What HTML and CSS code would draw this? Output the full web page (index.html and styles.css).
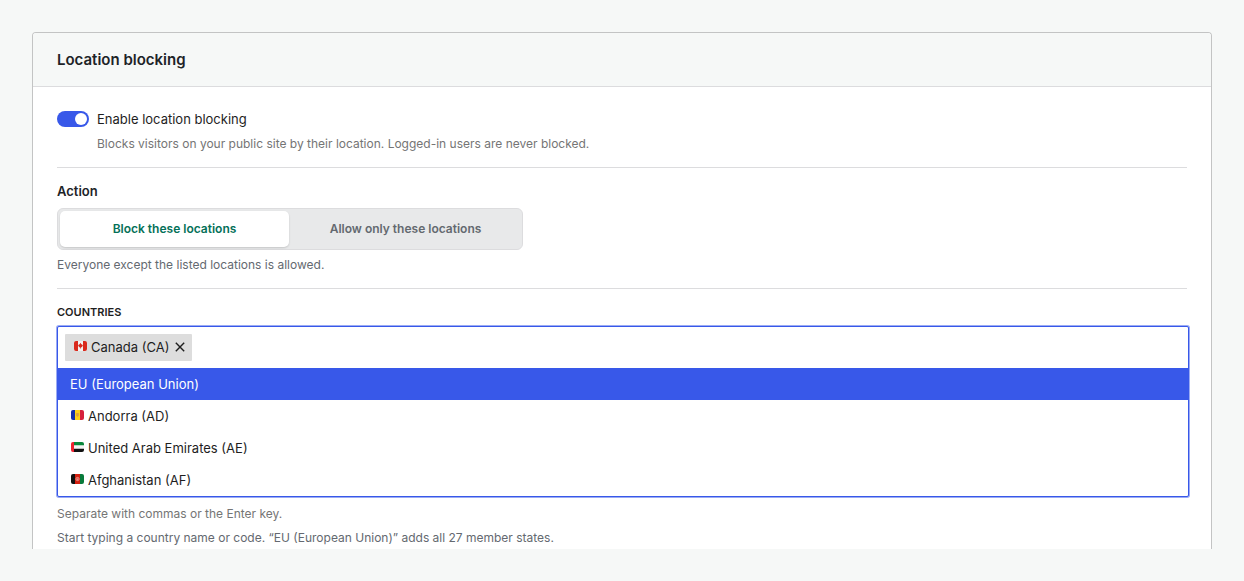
FILE: index.html
```html
<!DOCTYPE html>
<html lang="en">
<head>
  <meta charset="UTF-8">
  <meta name="viewport" content="width=device-width, initial-scale=1">
  <title>Location blocking</title>
  <link rel="stylesheet" href="styles.css">
</head>
<body>
  <main class="page">
    <section class="card">
      <header class="card-header">
        <h2>Location blocking</h2>
      </header>

      <form class="card-body">
        <!-- Toggle -->
        <div class="section">
          <div class="toggle-row">
            <input class="toggle" type="checkbox" id="enable-blocking" role="switch" aria-describedby="enable-help" checked>
            <label for="enable-blocking">Enable location blocking</label>
          </div>
          <p class="help toggle-help" id="enable-help">Blocks visitors on your public site by their location. Logged-in users are never blocked.</p>
        </div>

        <!-- Action -->
        <div class="section">
          <h3 class="section-title" id="action-title">Action</h3>
          <div class="segmented" role="group" aria-labelledby="action-title">
            <button class="segment active" type="button" aria-pressed="true">Block these locations</button>
            <button class="segment" type="button" aria-pressed="false">Allow only these locations</button>
          </div>
          <p class="help help-dark">Everyone except the listed locations is allowed.</p>
        </div>

        <!-- Countries -->
        <div class="section">
          <label class="field-label" for="countries">Countries</label>
          <div class="token-field">
            <div class="token-input">
              <span class="token">
                <svg class="flag" viewBox="0 0 13 10" aria-hidden="true">
                  <rect width="13" height="10" rx="2" fill="#f1f1f1"/>
                  <path d="M2 0h2v10H2a2 2 0 0 1-2-2V2a2 2 0 0 1 2-2zM9 0h2a2 2 0 0 1 2 2v6a2 2 0 0 1-2 2H9z" fill="#d9291c"/>
                  <path d="M6.500 1.800l.7 1.300.6-.2-.1 1.100 1.200-.3-.4 1.500-1.600 1.500h-.2v1.300h-.4V6.700h-.2L4.500 5.200l-.4-1.500 1.200.3-.1-1.100.6.2z" fill="#d9291c"/>
                </svg>
                Canada (CA)
                <button class="token-remove" type="button" aria-label="Remove Canada">
                  <svg viewBox="0 0 10 10" aria-hidden="true"><path d="M.8.8l8.400 8.400M9.200.8L.8 9.200"/></svg>
                </button>
              </span>
              <input type="text" id="countries" role="combobox" aria-expanded="true" aria-controls="country-list" autocomplete="off">
            </div>
            <ul class="options" id="country-list" role="listbox">
              <li class="option selected" role="option" aria-selected="true">EU (European Union)</li>
              <li class="option" role="option">
                <svg class="flag" viewBox="0 0 13 10" aria-hidden="true">
                  <path d="M2 0h3v10H2a2 2 0 0 1-2-2V2a2 2 0 0 1 2-2z" fill="#1430a8"/>
                  <path d="M4 0h5v10H4z" fill="#fcd116"/>
                  <path d="M9 0h2a2 2 0 0 1 2 2v6a2 2 0 0 1-2 2H9z" fill="#d6203c"/>
                  <path d="M5.200 3h2.600v2.600L6.500 7 5.200 5.600z" fill="#d9a040"/>
                </svg>
                Andorra (AD)
              </li>
              <li class="option" role="option">
                <svg class="flag" viewBox="0 0 13 10" aria-hidden="true">
                  <rect width="13" height="10" rx="2" fill="#f4f4f4"/>
                  <path d="M3 0h8a2 2 0 0 1 2 2v1.300H3z" fill="#07873a"/>
                  <path d="M3 6.700h10V8a2 2 0 0 1-2 2H3z" fill="#111"/>
                  <path d="M2 0h1v10H2a2 2 0 0 1-2-2V2a2 2 0 0 1 2-2z" fill="#ee2230"/>
                </svg>
                United Arab Emirates (AE)
              </li>
              <li class="option" role="option">
                <svg class="flag" viewBox="0 0 13 10" aria-hidden="true">
                  <path d="M2 0h3v10H2a2 2 0 0 1-2-2V2a2 2 0 0 1 2-2z" fill="#111"/>
                  <path d="M4 0h5v10H4z" fill="#d32011"/>
                  <path d="M9 0h2a2 2 0 0 1 2 2v6a2 2 0 0 1-2 2H9z" fill="#087a3b"/>
                  <circle cx="6.500" cy="5" r="1.600" fill="none" stroke="#f0b5ae" stroke-width=".8"/>
                  <path d="M6 4.500h1v1.300H6z" fill="#f0b5ae"/>
                </svg>
                Afghanistan (AF)
              </li>
            </ul>
          </div>
          <p class="help field-help">Separate with commas or the Enter key.</p>
          <p class="help help-dark">Start typing a country name or code. “EU (European Union)” adds all 27 member states.</p>
        </div>
      </form>
    </section>
  </main>
</body>
</html>
```

FILE: styles.css
```css
* {
  margin: 0;
  padding: 0;
  box-sizing: border-box;
}

body {
  font-family: Inter, "Liberation Sans", sans-serif;
  font-size: 13px;
  line-height: 16px;
  color: #1e1e1e;
  background: #f6f8f7;
}

button,
input {
  font: inherit;
  color: inherit;
}

.page {
  padding: 32px;
}

/* Card */
.card {
  background: #fff;
  border: 1px solid #c3c4c4;
  border-bottom: 0;
  border-radius: 4px 4px 0 0;
  overflow: hidden;
}

.card-header {
  padding: 17px 24px 16px;
  background: #f6f8f7;
  border-bottom: 1px solid #dcdcde;
}

.card-header h2 {
  font-size: 15px;
  font-weight: 600;
  line-height: 20px;
  color: #1d2327;
}

.card-body {
  padding: 0 24px;
}

.section {
  padding: 15px 0;
  border-bottom: 1px solid #dcdcde;
}

.section:first-child {
  padding-top: 24px;
}

.section:last-child {
  padding-bottom: 3px;
  border-bottom: 0;
}

.section-title {
  font-size: 13px;
  font-weight: 600;
  color: #1d2327;
}

.help {
  margin-top: 8px;
  font-size: 12px;
  color: #757575;
}

.help-dark {
  color: #646970;
}

/* Toggle switch */
.toggle-row {
  display: flex;
  align-items: center;
  gap: 8px;
}

.toggle {
  appearance: none;
  display: flex;
  width: 32px;
  height: 16px;
  padding: 2px;
  justify-content: flex-end;
  border-radius: 8px;
  background: #3858e9;
}

.toggle::before {
  content: "";
  width: 12px;
  height: 12px;
  border-radius: 50%;
  background: #fff;
}

.toggle:not(:checked) {
  justify-content: flex-start;
  background: #949494;
}

.toggle-help {
  margin-top: 9px;
  margin-left: 40px;
}

/* Segmented control */
.segmented {
  display: grid;
  grid-template-columns: 1fr 1fr;
  gap: 2px;
  max-width: 466px;
  margin-top: 9px;
  padding: 2px;
  background: #e8e9ea;
  border: 1px solid #dcdcde;
  border-radius: 6px;
}

.segmented + .help {
  margin-top: 7px;
}

.segment {
  height: 36px;
  font-size: 12px;
  font-weight: 600;
  color: #646970;
  background: none;
  border: 0;
  border-radius: 5px;
}

.segment.active {
  color: #047058;
  background: #fff;
  box-shadow: 0 1px 2px rgba(0, 0, 0, 0.15);
}

/* Countries field */
.field-label {
  display: block;
  margin-bottom: 6px;
  font-size: 11px;
  font-weight: 600;
  text-transform: uppercase;
}

.token-field {
  margin-right: -2px;
  background: #fff;
  border: 1px solid #3858e9;
  border-radius: 2px;
  box-shadow: 0 0 0 1px rgba(56, 88, 233, 0.5);
}

.token-input {
  display: flex;
  padding: 7px;
}

.token-input input {
  flex: 1;
  min-width: 0;
  border: 0;
  outline: 0;
  background: none;
}

.token {
  display: flex;
  align-items: center;
  height: 27px;
  padding: 0 7px 1px 9px;
  background: #ddd;
  border-radius: 1px;
}

.flag {
  flex: none;
  width: 13px;
  height: 10px;
  margin: 0 4px 2px 0;
}

.token-remove {
  display: flex;
  margin-left: 6px;
  background: none;
  border: 0;
}

.token-remove svg {
  width: 10px;
  height: 10px;
  fill: none;
  stroke: #1e1e1e;
  stroke-width: 1.4;
}

.options {
  list-style: none;
}

.option {
  display: flex;
  align-items: center;
  height: 32px;
  padding: 0 13px;
}

.option.selected {
  padding: 0 12px;
  color: #fff;
  background: #3858e9;
}

.field-help {
  margin-top: 9px;
}
```
